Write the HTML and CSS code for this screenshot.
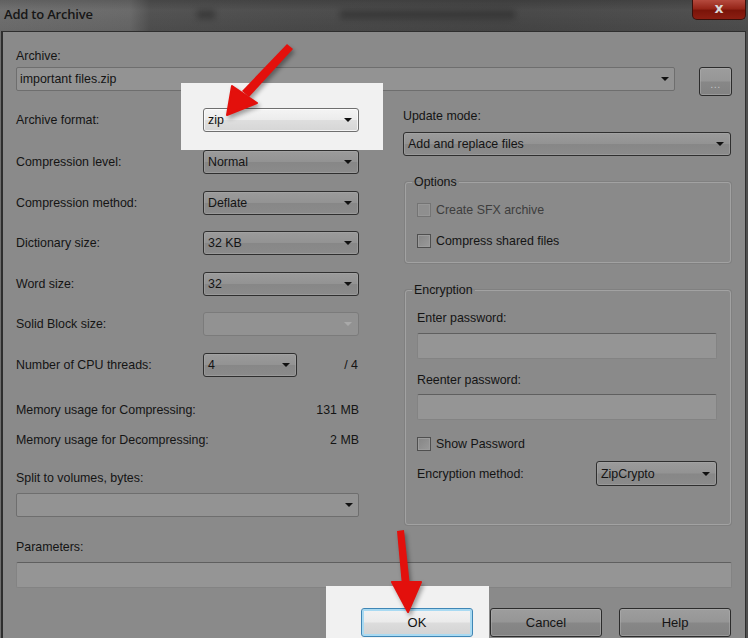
FILE: index.html
```html
<!DOCTYPE html>
<html lang="en">
<head>
<meta charset="utf-8">
<title>Add to Archive</title>
<link rel="stylesheet" href="styles.css">
</head>
<body>
<div class="window">
  <div class="titlebar">
    <span class="title">Add to Archive</span>
    <span class="blur blur-a"></span>
    <span class="blur blur-b"></span>
    <div class="close"><span>x</span></div>
  </div>
  <div class="dialog">
    <div class="label">Archive:</div>
    <div class="archive-row">
      <div class="combo combo-edit grow"><span class="val">important files.zip</span><span class="arrow"></span></div>
      <div class="btn btn-browse"><span>...</span></div>
    </div>

    <div class="columns">
      <div class="col-left">
        <div class="rows">
          <div class="row row-first">
            <span class="row-label">Archive format:</span>
            <div class="spot spot-format">
              <div class="combo combo-lit"><span class="val">zip</span><span class="arrow"></span></div>
            </div>
          </div>
          <div class="row">
            <span class="row-label">Compression level:</span>
            <div class="combo"><span class="val">Normal</span><span class="arrow"></span></div>
          </div>
          <div class="row">
            <span class="row-label">Compression method:</span>
            <div class="combo"><span class="val">Deflate</span><span class="arrow"></span></div>
          </div>
          <div class="row">
            <span class="row-label">Dictionary size:</span>
            <div class="combo"><span class="val">32 KB</span><span class="arrow"></span></div>
          </div>
          <div class="row">
            <span class="row-label">Word size:</span>
            <div class="combo"><span class="val">32</span><span class="arrow"></span></div>
          </div>
          <div class="row">
            <span class="row-label">Solid Block size:</span>
            <div class="combo combo-disabled"><span class="val"></span><span class="arrow"></span></div>
          </div>
          <div class="row">
            <span class="row-label">Number of CPU threads:</span>
            <div class="combo combo-small"><span class="val">4</span><span class="arrow"></span></div>
            <span class="threads">/ 4</span>
          </div>
        </div>
        <div class="mem mem-first"><span>Memory usage for Compressing:</span><span>131 MB</span></div>
        <div class="mem"><span>Memory usage for Decompressing:</span><span>2 MB</span></div>
        <div class="label split-label">Split to volumes, bytes:</div>
        <div class="combo combo-edit split-combo"><span class="val"></span><span class="arrow"></span></div>
      </div>

      <div class="col-right">
        <div class="label update-label">Update mode:</div>
        <div class="combo combo-wide"><span class="val">Add and replace files</span><span class="arrow"></span></div>

        <fieldset class="group group-options">
          <legend>Options</legend>
          <div class="group-body options-body">
            <div class="check check-disabled"><span class="box"></span><span>Create SFX archive</span></div>
            <div class="check"><span class="box"></span><span>Compress shared files</span></div>
          </div>
        </fieldset>

        <fieldset class="group group-enc">
          <legend>Encryption</legend>
          <div class="group-body enc-body">
            <div class="label">Enter password:</div>
            <div class="input pw-input"></div>
            <div class="label reenter-label">Reenter password:</div>
            <div class="input pw-input2"></div>
            <div class="check show-pw"><span class="box"></span><span>Show Password</span></div>
            <div class="enc-method">
              <span>Encryption method:</span>
              <div class="combo combo-enc"><span class="val">ZipCrypto</span><span class="arrow"></span></div>
            </div>
          </div>
        </fieldset>
      </div>
    </div>

    <div class="label params-label">Parameters:</div>
    <div class="input params-input"></div>

    <div class="buttons">
      <div class="spot spot-ok">
        <div class="btn btn-ok"><span>OK</span></div>
      </div>
      <div class="btn btn-main"><span>Cancel</span></div>
      <div class="btn btn-main"><span>Help</span></div>
    </div>
  </div>

  <svg class="arrows" width="748" height="638" viewBox="0 0 748 638" aria-hidden="true">
    <g class="arrow-shape">
      <polygon points="287,44 293,49 249,97 242,91" fill="#e3100c"/>
      <polygon points="227,115 232,86 257,103" fill="#e3100c" stroke="#e3100c" stroke-width="2" stroke-linejoin="round"/>
    </g>
    <g class="arrow-shape">
      <polygon points="397,531 404,530 410,586 402,586" fill="#e3100c"/>
      <polygon points="408,612 392,582 421,582" fill="#e3100c" stroke="#e3100c" stroke-width="2" stroke-linejoin="round"/>
    </g>
  </svg>
</div>
</body>
</html>
```

FILE: styles.css
```css
* { box-sizing: border-box; }

html, body {
  margin: 0;
  padding: 0;
  background: #4a4a4a;
}

body {
  font-family: "Liberation Sans", Arial, sans-serif;
  font-size: 12.4px;
  line-height: 14px;
  color: #141414;
}

.window {
  position: relative;
  width: 748px;
  height: 638px;
  overflow: hidden;
  background: linear-gradient(90deg, #6e6e6e 0px, #686868 130px, #505050 150px, #4b4b4b 300px, #464646 500px, #4e4e4e 748px);
}

/* ---------- title bar ---------- */
.titlebar {
  position: relative;
  height: 31px;
  display: flex;
  align-items: flex-start;
  background: linear-gradient(180deg, rgba(0,0,0,0.12) 0px, rgba(255,255,255,0.02) 10px, rgba(0,0,0,0.05) 31px);
}

.title {
  padding-left: 4px;
  padding-top: 6px;
  font-family: "Open Sans", "Liberation Sans", sans-serif;
  font-weight: 600;
  font-size: 13px;
  line-height: 16px;
  letter-spacing: -0.2px;
  color: #161616;
}

.blur {
  position: absolute;
  top: 10px;
  height: 9px;
  background: #2c2c2c;
  filter: blur(3px);
  opacity: 0.6;
}
.blur-a { left: 197px; width: 18px; }
.blur-b { left: 340px; width: 175px; }

.close {
  margin-left: auto;
  margin-right: 2px;
  width: 54px;
  height: 20px;
  border: 1px solid #3a0f0a;
  border-top: none;
  border-radius: 0 0 5px 5px;
  background: linear-gradient(180deg, #b54a3e 0%, #962518 45%, #7b1409 55%, #8c1e12 100%);
  display: flex;
  justify-content: center;
  align-items: center;
}
.close span {
  font-family: "DejaVu Sans", sans-serif;
  font-weight: bold;
  font-size: 14px;
  line-height: 14px;
  color: #d8d8d8;
  margin-top: -3px;
}

/* ---------- dialog body ---------- */
.dialog {
  margin-left: 1px;
  margin-right: 2px;
  height: 607px;
  border-top: 1px solid #2e2e2e;
  border-left: 2px solid #2e2e2e;
  border-right: 1px solid #2e2e2e;
  background: #8a8a8a;
  padding: 17px 13px 0 13px;
}

.label {
  height: 14px;
  white-space: nowrap;
}

.archive-row {
  display: flex;
  align-items: flex-start;
  margin-top: 4px;
}

.grow { flex: 1; }

/* ---------- combos ---------- */
.combo {
  height: 24px;
  width: 156px;
  display: flex;
  align-items: center;
  border: 1px solid #2f2f2f;
  border-radius: 3px;
  background: linear-gradient(180deg, #9b9b9b 0%, #939393 48%, #878787 52%, #8b8b8b 100%);
  box-shadow: inset 0 0 0 1px rgba(170,170,170,0.45);
  padding-left: 4px;
}
.combo .val {
  flex: 1;
  white-space: nowrap;
}
.combo .arrow {
  width: 0;
  height: 0;
  border-left: 4px solid transparent;
  border-right: 4px solid transparent;
  border-top: 4px solid #111;
  margin-right: 6px;
}

.combo-edit {
  border: 1px solid #6e6e6e;
  border-radius: 2px;
  background: #939393;
  box-shadow: none;
  padding-left: 3px;
}
.combo-edit .arrow { margin-right: 5px; }

.combo-lit {
  position: relative;
  border: 1px solid #6f6f6f;
  background: linear-gradient(180deg, #f4f4f4 0%, #ececec 48%, #dedede 52%, #d6d6d6 100%);
  box-shadow: inset 0 0 0 1px rgba(255,255,255,0.7);
  color: #111;
}

.combo-disabled {
  border: 1px solid #7b7b7b;
  background: #929292;
  box-shadow: none;
}
.combo-disabled .arrow { border-top-color: #a9a9a9; }

.combo-small { width: 94px; }
.combo-wide { width: 328px; }
.combo-enc { width: 121px; height: 25px; }

.split-combo {
  margin-top: 8px;
  width: 343px;
}

/* ---------- spotlight highlights ---------- */
.spot {
  position: relative;
}
.spot::before {
  content: "";
  position: absolute;
  background: #f1f1f1;
}
.spot-format::before {
  top: -25px;
  left: -22px;
  right: -24px;
  bottom: -18px;
}
.spot-ok::before {
  top: -22px;
  left: -35px;
  right: -16px;
  bottom: -2px;
}

/* ---------- columns ---------- */
.columns {
  display: flex;
  align-items: flex-start;
  gap: 44px;
  margin-top: 12px;
}

.col-left {
  width: 343px;
  display: flex;
  flex-direction: column;
}

.rows {
  display: flex;
  flex-direction: column;
  gap: 16.5px;
}
.row {
  display: flex;
  align-items: center;
  height: 24px;
}
.row-first { margin-bottom: 1.5px; }
.row-label {
  width: 187px;
  white-space: nowrap;
}
.threads {
  margin-left: auto;
  padding-right: 1px;
}

.mem {
  display: flex;
  justify-content: space-between;
  height: 14px;
  margin-top: 16px;
}
.mem-first { margin-top: 26.5px; }

.split-label { margin-top: 24px; }

.col-right {
  width: 328px;
  display: flex;
  flex-direction: column;
}

.update-label {
  margin-top: 1px;
  margin-bottom: 9px;
}

/* ---------- groups ---------- */
.group {
  margin: 0 0 0 2px;
  padding: 0;
  border: 1px solid #a2a2a2;
  border-radius: 3px;
  box-shadow: 0 0 0 1px rgba(110,110,110,0.35);
  min-width: 0;
}
.group legend {
  margin-left: 6px;
  padding: 0 2px;
  line-height: 14px;
}

.group-options { margin-top: 19px; }
.group-enc { margin-top: 20px; }

.group-body {
  padding-left: 11px;
  padding-right: 13px;
}

.options-body {
  padding-top: 14px;
  padding-bottom: 14px;
  display: flex;
  flex-direction: column;
  gap: 17px;
}

.check {
  display: flex;
  align-items: center;
  height: 14px;
  gap: 5px;
  white-space: nowrap;
}
.check .box {
  width: 14px;
  height: 14px;
  border: 1px solid #4f4f4f;
  background: linear-gradient(135deg, #858585, #9a9a9a);
  box-shadow: inset 0 0 0 1px #9c9c9c;
}
.check-disabled { color: #3d3d3d; }
.check-disabled .box {
  border-color: #747474;
  background: #8f8f8f;
  box-shadow: inset 0 0 0 1px #979797;
}

.enc-body {
  padding-top: 14px;
  padding-bottom: 38px;
  display: flex;
  flex-direction: column;
}

.input {
  height: 26px;
  border: 1px solid #838383;
  border-top-color: #5f5f5f;
  border-radius: 2px;
  background: #959595;
}
.pw-input { margin-top: 8px; }
.reenter-label { margin-top: 14px; }
.pw-input2 { margin-top: 7px; }
.show-pw { margin-top: 17px; }

.enc-method {
  display: flex;
  justify-content: space-between;
  align-items: center;
  margin-top: 10px;
}

/* ---------- parameters and buttons ---------- */
.params-label { margin-top: 15px; }
.params-input {
  margin-top: 8px;
  height: 26px;
}

.buttons {
  display: flex;
  justify-content: flex-end;
  gap: 17px;
  margin-top: 20px;
  padding-right: 1px;
}

.btn {
  display: flex;
  justify-content: center;
  align-items: center;
  border: 1px solid #2c2c2c;
  border-radius: 3px;
  background: linear-gradient(180deg, #9d9d9d 0%, #969696 48%, #878787 52%, #828282 100%);
  box-shadow: inset 0 0 0 1px rgba(175,175,175,0.5);
}

.btn-main,
.btn-ok {
  width: 112px;
  height: 29px;
  font-size: 13px;
}

.btn-ok {
  position: relative;
  border: 1px solid #3f86b5;
  background: linear-gradient(180deg, #f3f3f3 0%, #ebebeb 48%, #dcdcdc 52%, #d3d3d3 100%);
  box-shadow: inset 0 0 0 2px #a9daf2;
  color: #111;
}

.btn-browse {
  width: 33px;
  height: 29px;
  margin-left: 24px;
  padding-top: 6px;
}
.btn-browse span {
  font-size: 11px;
  line-height: 11px;
  color: #c2c2c2;
  letter-spacing: 0.5px;
}

/* ---------- arrows overlay ---------- */
.arrows {
  position: absolute;
  top: 0;
  left: 0;
  pointer-events: none;
}
.arrow-shape {
  filter: drop-shadow(2px 3px 2px rgba(0,0,0,0.35));
}
```
